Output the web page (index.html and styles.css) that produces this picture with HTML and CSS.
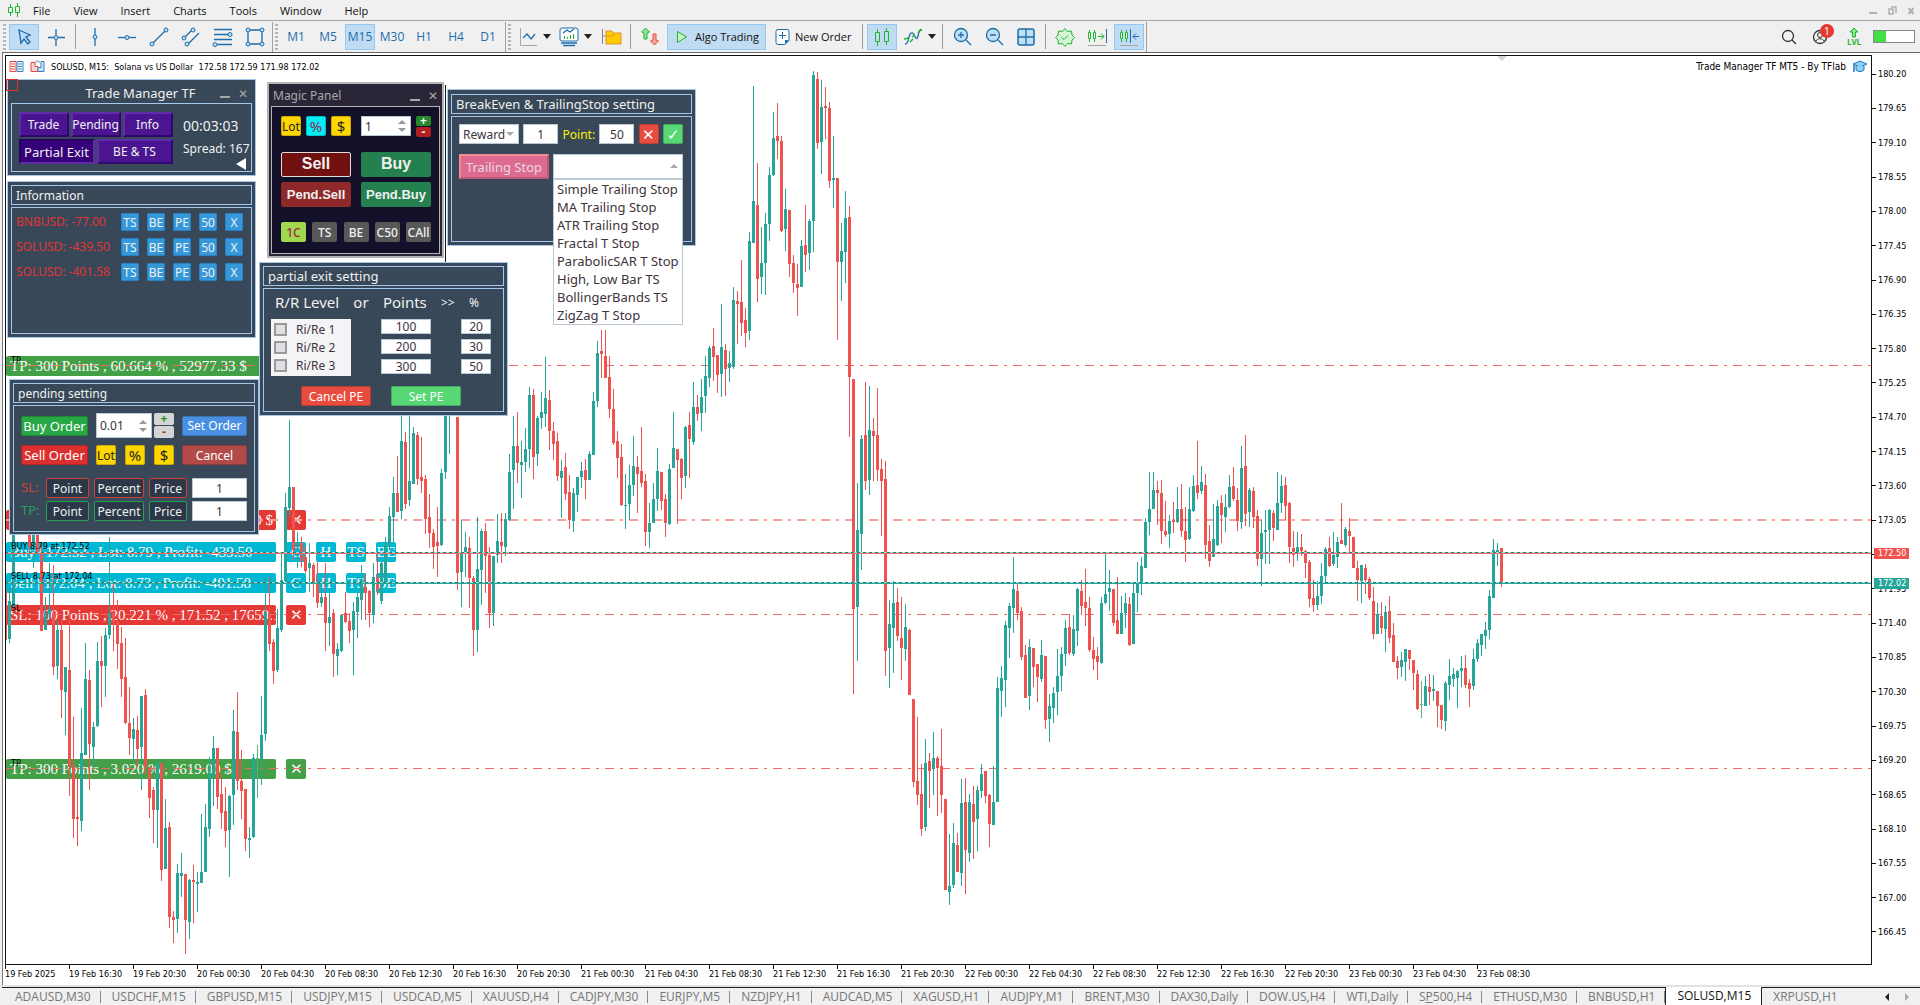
FILE: index.html
```html
<!DOCTYPE html>
<html lang="en">

<head>
    <meta charset="UTF-8">
    <meta name="viewport" content="width=device-width, initial-scale=1.0">
    <title>SOLUSD, M15</title>
    <link rel="stylesheet" href="styles.css">
</head>

<body>
    <header class="menubar">
        <svg class="app-icon" width="14" height="14" viewBox="0 0 14 14"><path d="M3.5 1v3M3.5 10v3M10.5 0v3M10.5 10v4M1.5 4.5h4v5h-4zM8.5 3.5h4v6h-4z" fill="none" stroke="#1fb52e"/></svg>
        <nav class="menu">
            <a href="#">File</a>
            <a href="#">View</a>
            <a href="#">Insert</a>
            <a href="#">Charts</a>
            <a href="#">Tools</a>
            <a href="#">Window</a>
            <a href="#">Help</a>
        </nav>
        <div class="window-buttons">
            <button aria-label="Minimize"><svg width="9" height="9"><path d="M0 7h8" stroke="#b0b0b0" stroke-width="2"/></svg></button>
            <button aria-label="Restore"><svg width="9" height="9"><path d="M1 3h4v5H1zM3 1h5v6" fill="none" stroke="#b0b0b0" stroke-width="1.5"/></svg></button>
            <button aria-label="Close"><svg width="9" height="9"><path d="M1.500 2l5 6M6.500 2l-5 6" stroke="#b0b0b0" stroke-width="2"/></svg></button>
        </div>
    </header>

    <div class="toolbar">
        <span class="grip"></span>
        <button class="tool active" aria-label="Cursor"><svg width="24" height="24"><path d="M7 5l11 5-4 2 4 5-2 2-4-5-3 4z" class="line"/></svg></button>
        <button class="tool" aria-label="Crosshair"><svg width="24" height="24"><path d="M12 4v6M12 14v7M4 12.500h6M14 12.500h7" class="line"/><circle cx="12" cy="12.500" r="2" class="dot"/></svg></button>
        <span class="sep"></span>
        <button class="tool" aria-label="Vertical line"><svg width="24" height="24"><path d="M12 3v18" class="line"/><circle cx="12" cy="12" r="2" class="dot"/></svg></button>
        <button class="tool" aria-label="Horizontal line"><svg width="24" height="24"><path d="M3 12.500h18" class="line"/><circle cx="12" cy="12.500" r="2" class="dot"/></svg></button>
        <button class="tool" aria-label="Trend line"><svg width="24" height="24"><path d="M5 19L19 5" class="line"/><circle cx="5" cy="19" r="2" class="dot"/><circle cx="19" cy="5" r="2" class="dot"/></svg></button>
        <button class="tool" aria-label="Equidistant channel"><svg width="24" height="24"><path d="M5 13l8-8M8 20L20 8" class="line"/><circle cx="5" cy="13" r="2" class="dot"/><circle cx="14" cy="5" r="2" class="dot"/><circle cx="8" cy="19" r="2" class="dot"/></svg></button>
        <button class="tool" aria-label="Fibonacci"><svg width="24" height="24"><path d="M3 4.500h18M3 9.500h14M3 14.500h18M6 19.500h15" class="line"/><circle cx="19" cy="9.500" r="2" class="dot"/><circle cx="4" cy="19.500" r="2" class="dot"/></svg></button>
        <button class="tool" aria-label="Rectangle"><svg width="24" height="24"><path d="M5 5h14v14H5z" class="line"/><circle cx="5" cy="5" r="2" class="dot"/><circle cx="19" cy="5" r="2" class="dot"/><circle cx="5" cy="19" r="2" class="dot"/><circle cx="19" cy="19" r="2" class="dot"/></svg></button>
        <span class="bar"></span>
        <span class="grip"></span>
        <button class="tool frame">M1</button>
        <button class="tool frame">M5</button>
        <button class="tool frame active">M15</button>
        <button class="tool frame">M30</button>
        <button class="tool frame">H1</button>
        <button class="tool frame">H4</button>
        <button class="tool frame">D1</button>
        <span class="bar"></span>
        <span class="grip"></span>
        <button class="tool drop" aria-label="Line chart"><svg width="22" height="24"><path d="M3.500 3v17.500H20" fill="none" stroke="#a5a5a5"/><path d="M6 13l4-4 4 5 4-5" class="line"/></svg></button>
        <button class="tool drop" aria-label="Indicators"><svg width="22" height="24"><rect x="2" y="3" width="18" height="13" rx="2" fill="#fff" stroke="#1c6cab"/><path d="M5 8l4-3 3 2 4-3" class="line"/><path d="M6.500 14v-3M9.500 14v-2M12.500 14v-4M15.500 14v-5" stroke="#1fb52e"/><path d="M3 18h16M5 20.500h12" class="line"/></svg></button>
        <button class="tool" aria-label="Objects"><svg width="24" height="24"><path d="M3.500 4v15M3.500 11h4" fill="none" stroke="#888"/><path d="M7 6h6l1 2h8v11H7z" fill="#fc0" stroke="#e0912a"/><path d="M7 11h7l1-2" fill="none" stroke="#e0912a"/></svg></button>
        <span class="sep"></span>
        <button class="tool" aria-label="Depth of market"><svg width="24" height="24"><path d="M7.500 3l4 4-2.500 1v6H6V8L3.500 7z" fill="#8fe39a" stroke="#1fb52e"/><path d="M15 9h3v6l2.500 1-4 4-4-4 2.500-1z" fill="#f7a59f" stroke="#e84a42"/></svg></button>
        <button class="tool wide active"><svg width="16" height="16"><path d="M3.500 2.500l9 5.500-9 5.500z" fill="#c9f2c9" stroke="#1fb52e"/></svg>Algo Trading</button>
        <button class="tool wide"><svg width="15" height="18"><path d="M3 1.500h9a2 2 0 0 1 2 2v9l-4 4H3a2 2 0 0 1-2-2v-11a2 2 0 0 1 2-2z" fill="#fff" stroke="#1c6cab"/><path d="M14 12l-4 4v-4z" fill="#1c6cab"/><path d="M4 7.500h7M7.500 4v7" stroke="#1c6cab"/></svg>New Order</button>
        <span class="sep"></span>
        <button class="tool active" aria-label="Candles"><svg width="22" height="24"><path d="M6.500 4v3M6.500 17v4M15.500 3v3M15.500 17v3M4.500 7.500h4v9h-4zM13.500 6.500h4v10h-4z" fill="none" stroke="#1fb52e"/></svg></button>
        <button class="tool drop" aria-label="Chart type"><svg width="22" height="24"><path d="M3 19c3 0 3-3 4-7s3-6 5-2 3 5 4 1 1-6 4-6" class="line"/><path d="M2 14l5-1M10 12l3-2M16 8l3-4M8 17l3-3" fill="none" stroke="#1fb52e" stroke-width="1.500"/></svg></button>
        <span class="sep"></span>
        <button class="tool" aria-label="Zoom in"><svg width="24" height="24"><circle cx="11" cy="10" r="6.500" fill="#bfe0f2" stroke="#1c6cab" stroke-width="1.300"/><path d="M8 10h6M11 7v6M16 15l5 5" class="line"/></svg></button>
        <button class="tool" aria-label="Zoom out"><svg width="24" height="24"><circle cx="11" cy="10" r="6.500" fill="#bfe0f2" stroke="#1c6cab" stroke-width="1.300"/><path d="M8 10h6M16 15l5 5" class="line"/></svg></button>
        <button class="tool" aria-label="Tile windows"><svg width="24" height="24"><rect x="4" y="4" width="16" height="16" rx="2" fill="#bfe0f2" stroke="#1c6cab" stroke-width="1.500"/><path d="M4 12h16M12 4v16" class="line"/></svg></button>
        <span class="sep"></span>
        <button class="tool" aria-label="Auto trading settings"><svg width="24" height="24"><path d="M12 3.500l2.500 3 4-.500.500 4 2.500 2.500-2.500 2.500-.500 4-4-.500-2.500 3-2.500-3-4 .500-.500-4-2.500-2.500L5 10l.500-4 4 .500z" fill="#d5f5d5" stroke="#1fb52e"/><path d="M8.500 12.500l2.500 2 4-4" fill="none" stroke="#1fb52e"/></svg></button>
        <button class="tool" aria-label="Auto scroll"><svg width="24" height="24"><path d="M4.500 5v12M9.500 5v12" stroke="#1fb52e"/><path d="M3.500 7.500h2v6h-2zM8.500 7.500h2v6h-2z" fill="#fff" stroke="#1fb52e"/><path d="M13 11.500h6M16 8.500l3 3-3 3" fill="none" stroke="#1fb52e"/><path d="M21.500 4v14" stroke="#1c6cab"/><path d="M3 20.500h18" stroke="#a5a5a5"/></svg></button>
        <button class="tool active" aria-label="Chart shift"><svg width="24" height="24"><path d="M4.500 5v12M9.500 5v12" stroke="#1fb52e"/><path d="M3.500 7.500h2v6h-2zM8.500 7.500h2v6h-2z" fill="#fff" stroke="#1fb52e"/><path d="M13.500 4v14M16 11.500h6M19 8.500l-3 3 3 3" fill="none" stroke="#1c6cab"/><path d="M3 20.500h18" stroke="#a5a5a5"/></svg></button>
        <span class="bar"></span>

        <div class="status">
            <button class="tool" aria-label="Search"><svg width="18" height="18"><circle cx="8" cy="8" r="5.500" fill="none" stroke="#333" stroke-width="1.300"/><path d="M12 12l4 4" stroke="#333" stroke-width="1.300"/></svg></button>
            <button class="tool account" aria-label="Account"><svg width="18" height="18"><circle cx="9" cy="9" r="6.500" fill="none" stroke="#333" stroke-width="1.300"/><circle cx="9" cy="7" r="2.500" fill="none" stroke="#333"/><path d="M5 13c1-3 7-3 8 0" fill="none" stroke="#333"/></svg><span class="badge">1</span></button>
            <span class="level"><svg width="12" height="11"><path d="M6 1l4 4H7.500v5h-3V5H2z" fill="#8fe39a" stroke="#1fb52e"/></svg>LVL</span>
            <span class="gauge"><span></span></span>
        </div>
    </div>

    <main class="chart">
        <section class="plot">
            <!-- position bars, drawn under the candles -->
            <div class="trade-line tp first"><span class="info">TP: 300 Points , 60.664 % , 52977.33 $</span></div>
            <div class="trade-line sl second"><span class="info end">SL: 100 Points , 20.221 % , 17659.10 $</span><button>✕</button></div>
            <div class="trade-line pos buy-pos"><span class="info">Buy | 172.52 , Lot: 8.79 , Profit: -439.50</span><button>C</button><button>H</button><button>TS</button><button>BE</button></div>
            <div class="trade-line pos sell-pos"><span class="info">Sell | 172.04 , Lot: 8.73 , Profit: -401.58</span><button>C</button><button>H</button><button>TS</button><button>BE</button></div>
            <div class="trade-line sl third"><span class="info">SL: 100 Points , 20.221 % , 171.52 , 17659.1</span><button>✕</button></div>
            <div class="trade-line tp fourth"><span class="info">TP: 300 Points , 3.020 % , 2619.00 $</span><button>✕</button></div>

            <svg class="candles" id="candles"></svg>

            <div class="chart-title">
                <svg width="15" height="13"><path d="M1 1.500h6v10H1z" fill="#fff" stroke="#e84a42"/><path d="M8 1.500h6v10H8z" fill="#fff" stroke="#2f80c4"/><path d="M2 4h4M2 6.500h4M2 9h4" stroke="#e84a42"/><path d="M9 4h4M9 6.500h4M9 9h4" stroke="#2f80c4"/></svg>
                <svg width="15" height="13"><path d="M1 2.500h4v4h3v5H1z" fill="#fbd3cf" stroke="#e84a42"/><path d="M14 1.500h-3v6H8v4h6z" fill="#cfe6fa" stroke="#2f80c4"/><path d="M6 3V1h3v2" fill="none" stroke="#999"/></svg>
                <span>SOLUSD, M15:&nbsp; Solana vs US Dollar&nbsp; 172.58 172.59 171.98 172.02</span>
            </div>
            <div class="expert-title">
                <span>Trade Manager TF MT5 - By TFlab</span>
                <svg width="16" height="13"><path d="M1 4l7-3 7 3-7 3z" fill="#8fd0f5" stroke="#1c7ac0"/><path d="M4 6v4c2 2 6 2 8 0V6" fill="#8fd0f5" stroke="#1c7ac0"/><path d="M2 5v7" stroke="#1c7ac0" stroke-width="1.500"/></svg>
            </div>
            <span class="shift-mark"></span>

            <span class="order-label l1">TP</span>
            <span class="order-label l2">BUY 8.79 at 172.52</span>
            <span class="order-label l3">SELL 8.73 at 172.04</span>
            <span class="order-label l4">SL</span>
            <span class="order-label l5">TP</span>

            <section class="panel manager">
                <div class="title"><h2>Trade Manager TF</h2><button class="min" aria-label="Minimize"></button><button aria-label="Close">✕</button></div>
                <div class="body">
                    <div class="tabs">
                        <button>Trade</button><button>Pending</button><button>Info</button>
                        <button class="half pressed">Partial Exit</button><button class="half">BE &amp; TS</button>
                    </div>
                    <div class="readout"><span class="clock">00:03:03</span><span>Spread: 167</span><button class="collapse" aria-label="Collapse"></button></div>
                </div>
            </section>
            <span class="anchor"></span>

            <section class="panel information">
                <h2 class="head">Information</h2>
                <div class="body">
                    <table>
                        <tr><th>BNBUSD: -77.00</th><td><button>TS</button></td><td><button>BE</button></td><td><button>PE</button></td><td><button>50</button></td><td><button>X</button></td></tr>
                        <tr><th>SOLUSD: -439.50</th><td><button>TS</button></td><td><button>BE</button></td><td><button>PE</button></td><td><button>50</button></td><td><button>X</button></td></tr>
                        <tr><th>SOLUSD: -401.58</th><td><button>TS</button></td><td><button>BE</button></td><td><button>PE</button></td><td><button>50</button></td><td><button>X</button></td></tr>
                    </table>
                </div>
            </section>

            <section class="panel pending">
                <h2 class="head">pending setting</h2>
                <div class="body">
                    <div class="row">
                        <button class="btn order green">Buy Order</button>
                        <div class="mid"><span class="spin"><input type="text" value="0.01" aria-label="Lot size"></span><span class="steps"><button class="plus">+</button><button class="minus">-</button></span></div>
                        <button class="btn action blue">Set Order</button>
                    </div>
                    <div class="row second-row">
                        <button class="btn order red">Sell Order</button>
                        <div class="mid"><button class="btn unit">Lot</button><button class="btn unit sign">%</button><button class="btn unit sign">$</button></div>
                        <button class="btn action maroon">Cancel</button>
                    </div>
                    <div class="levels stop"><label for="sl">SL:</label><button>Point</button><button class="w50">Percent</button><button class="w38">Price</button><input id="sl" type="text" value="1"></div>
                    <div class="levels take"><label for="tp">TP:</label><button>Point</button><button class="w50">Percent</button><button class="w38">Price</button><input id="tp" type="text" value="1"></div>
                </div>
            </section>

            <section class="panel partial">
                <h2 class="head">partial exit setting</h2>
                <div class="body">
                    <div class="captions"><span>R/R Level</span><span>or</span><span>Points</span><span class="small">&gt;&gt;</span><span class="small">%</span></div>
                    <div class="targets">
                        <div class="checks">
                            <label><input type="checkbox">Ri/Re 1</label>
                            <label><input type="checkbox">Ri/Re 2</label>
                            <label><input type="checkbox">Ri/Re 3</label>
                        </div>
                        <div class="fields points"><input type="text" value="100" aria-label="Points 1"><input type="text" value="200" aria-label="Points 2"><input type="text" value="300" aria-label="Points 3"></div>
                        <div class="fields percents"><input type="text" value="20" aria-label="Percent 1"><input type="text" value="30" aria-label="Percent 2"><input type="text" value="50" aria-label="Percent 3"></div>
                    </div>
                    <div class="actions"><button class="btn tomato">Cancel PE</button><button class="btn lime">Set PE</button></div>
                </div>
            </section>

            <section class="panel magic">
                <div class="title"><h2>Magic Panel</h2><button class="min" aria-label="Minimize"></button><button aria-label="Close">✕</button></div>
                <div class="body">
                    <div class="sizes">
                        <button class="btn unit">Lot</button><button class="btn unit sign cyan">%</button><button class="btn unit sign">$</button>
                        <span class="spin"><input type="text" value="1" aria-label="Volume"></span>
                        <span class="steps"><button class="plus">+</button><button class="minus">-</button></span>
                    </div>
                    <div class="deal"><button class="big sell">Sell</button><button class="big buy">Buy</button><button class="pend-sell">Pend.Sell</button><button class="pend-buy">Pend.Buy</button></div>
                    <div class="quick"><button class="on">1C</button><button>TS</button><button>BE</button><button>C50</button><button>CAll</button></div>
                </div>
            </section>

            <section class="panel breakeven">
                <h2 class="head">BreakEven &amp; TrailingStop setting</h2>
                <div class="body">
                    <div class="row be-row">
                        <span class="pick reward"><select aria-label="Break even mode"><option>Reward</option></select></span>
                        <input class="w35" type="text" value="1" aria-label="Reward">
                        <label for="point">Point:</label>
                        <input class="w35" id="point" type="text" value="50">
                        <button class="btn unit sign tomato">✕</button>
                        <button class="btn unit sign lime">✓</button>
                    </div>
                    <div class="row ts-row">
                        <button class="trailing">Trailing Stop</button>
                        <span class="pick kind"><select aria-label="Trailing stop type"><option></option></select>
                            <ul class="options">
                                <li>Simple Trailing Stop</li>
                                <li>MA Trailing Stop</li>
                                <li>ATR Trailing Stop</li>
                                <li>Fractal T Stop</li>
                                <li>ParabolicSAR T Stop</li>
                                <li>High, Low Bar TS</li>
                                <li>BollingerBands TS</li>
                                <li>ZigZag T Stop</li>
                            </ul>
                        </span>
                    </div>
                </div>
            </section>
        </section>

        <div class="prices" id="prices">
            <span class="quote ask">172.50</span>
            <span class="quote bid">172.02</span>
        </div>
        <div class="times" id="times"></div>
    </main>

    <footer class="chart-tabs">
        <nav>
            <a href="#">ADAUSD,M30</a>
            <a href="#">USDCHF,M15</a>
            <a href="#">GBPUSD,M15</a>
            <a href="#">USDJPY,M15</a>
            <a href="#">USDCAD,M5</a>
            <a href="#">XAUUSD,H4</a>
            <a href="#">CADJPY,M30</a>
            <a href="#">EURJPY,M5</a>
            <a href="#">NZDJPY,H1</a>
            <a href="#">AUDCAD,M5</a>
            <a href="#">XAGUSD,H1</a>
            <a href="#">AUDJPY,M1</a>
            <a href="#">BRENT,M30</a>
            <a href="#">DAX30,Daily</a>
            <a href="#">DOW.US,H4</a>
            <a href="#">WTI,Daily</a>
            <a href="#">S<u>P</u>500,H4</a>
            <a href="#">ETHUSD,M30</a>
            <a href="#">BNBUSD,H1</a>
            <a href="#" class="current">SOLUSD,M15</a>
            <a href="#">XRPUSD,H1</a>
        </nav>
        <div class="scroll"><button aria-label="Scroll left"></button><button class="next" aria-label="Scroll right"></button></div>
    </footer>

    <script src="chart.js"></script>
</body>

</html>
```
FILE: styles.css
```css
* {
    box-sizing: border-box;
}

body {
    margin: 0;
    height: 100vh;
    display: flex;
    flex-direction: column;
    overflow: hidden;
    background-color: #f0f0f0;
    color: #111;
    font-family: "Open Sans", sans-serif;
    font-size: 11px;
}

button, input, select {
    font: inherit;
    color: inherit;
    margin: 0;
    padding: 0;
    border: none;
    border-radius: 0;
    background: none;
    outline: none;
}

button {
    cursor: pointer;
    white-space: nowrap;
}

a {
    color: inherit;
    text-decoration: none;
}

h2 {
    margin: 0;
    font-size: inherit;
    font-weight: normal;
}

svg {
    flex: none;
}

/* menu and toolbar */
.menubar {
    display: flex;
    align-items: center;
    height: 21px;
    padding-left: 7px;
    border-bottom: 1px solid #a5a5a5;
}

.menu {
    display: flex;
    flex: 1;
}

.menu a {
    padding: 0 11px 0 12px;
}

.window-buttons {
    display: flex;
    gap: 10px;
    padding-right: 4px;
}

.window-buttons button {
    display: flex;
}

.toolbar {
    display: flex;
    align-items: center;
    gap: 2px;
    height: 31px;
    padding-left: 3px;
}

.tool {
    display: flex;
    align-items: center;
    justify-content: center;
    width: 30px;
    height: 26px;
    border: 1px solid transparent;
}

.tool.active {
    background-color: #c0dcf3;
    border-color: #90c8f6;
}

.tool .line {
    fill: none;
    stroke: #1c6cab;
    stroke-width: 1.3;
}

.tool .dot {
    fill: #bfe0f2;
    stroke: #1c6cab;
}

.tool.frame {
    color: #1c6cab;
    font-size: 12px;
}

.tool.drop {
    width: 39px;
    gap: 4px;
}

.tool.drop::after {
    content: "";
    border: 4px solid transparent;
    border-top: 5px solid #222;
    border-bottom: none;
}

.tool.wide {
    width: auto;
    gap: 5px;
    padding: 0 6px;
}

.grip {
    width: 3px;
    height: 26px;
    margin-right: 1px;
    background: repeating-linear-gradient(#b5b5b5 0 2px, transparent 2px 4px);
}

.sep {
    width: 1px;
    height: 25px;
    margin: 0 2px;
    background-color: #999;
}

.bar {
    width: 1px;
    height: 30px;
    background-color: #a0a0a0;
}

.status {
    display: flex;
    align-items: center;
    gap: 1px;
    margin-left: auto;
    padding-right: 5px;
}

.account {
    position: relative;
}

.badge {
    position: absolute;
    top: -1px;
    right: 0;
    width: 14px;
    height: 14px;
    border-radius: 7px;
    background-color: #e53935;
    color: #fff;
    font-size: 11px;
    line-height: 14px;
}

.level {
    display: flex;
    flex-direction: column;
    align-items: center;
    width: 36px;
    color: #1fb52e;
    font-size: 8px;
    font-weight: bold;
    line-height: 8px;
}

.gauge {
    width: 42px;
    height: 13px;
    border: 1px solid #888;
    background-color: #fff;
}

.gauge span {
    display: block;
    width: 30%;
    height: 100%;
    background-color: #43df45;
}

/* chart window */
.chart {
    flex: 1;
    min-height: 0;
    display: grid;
    grid-template-columns: 1fr 48px;
    grid-template-rows: 1fr 20px;
    margin-left: 2px;
    padding: 2px 0 0 2px;
    border-top: 1px solid #666;
    border-left: 1px solid #777;
    background-color: #fff;
    color: #000;
    font-family: "DejaVu Sans Condensed", "DejaVu Sans", sans-serif;
    font-size: 9px;
}

.plot {
    position: relative;
    overflow: hidden;
    border: 1px solid #111;
}

.candles {
    position: absolute;
    top: 0;
    left: 0;
    width: 100%;
    height: 100%;
    shape-rendering: crispEdges;
}

.candles .up {
    fill: #26a69a;
}

.candles .down {
    fill: #ef5350;
}

.candles .flat {
    fill: #55b77f;
}

.candles .order {
    stroke: #ef6a66;
    stroke-dasharray: 9 6 3 6;
}

.candles .order.soft {
    stroke: #f7a09e;
    stroke-width: 2;
}

.candles .entry {
    stroke: #1f8074;
    stroke-dasharray: 3 3;
}

.candles .entry-base {
    stroke: #a8d8d2;
}

.candles .ask {
    stroke: #ef6a68;
}

.candles .bid {
    stroke: #26a69a;
}

.candles .edge {
    stroke: #111;
}

.chart-title, .expert-title {
    position: absolute;
    top: 4px;
    display: flex;
    align-items: center;
    gap: 6px;
    white-space: pre;
}

.chart-title {
    left: 3px;
}

.expert-title {
    right: 3px;
    font-size: 10px;
}

.shift-mark {
    position: absolute;
    top: 0;
    left: 1491px;
    border: 5px solid transparent;
    border-top-color: #d5d5d5;
    border-bottom: none;
}

.prices {
    position: relative;
    display: flex;
    flex-direction: column;
    padding: 2px 0 16px;
}

.prices .price {
    flex: 1;
    display: flex;
    align-items: center;
    gap: 2px;
}

.prices .price::before {
    content: "";
    width: 4px;
    height: 1px;
    background-color: #111;
}

.quote {
    position: absolute;
    left: 2px;
    width: 35px;
    height: 11px;
    padding-left: 4px;
    color: #fff;
    line-height: 11px;
    z-index: 1;
}

.quote.ask {
    top: 493px;
    background-color: #ef5350;
}

.quote.bid {
    top: 523px;
    background-color: #26a69a;
}

.times {
    grid-column: 1 / 3;
    display: flex;
    overflow: hidden;
}

.times span {
    flex: none;
    width: 64px;
    padding-top: 3px;
    white-space: nowrap;
}

.times span::before {
    content: "";
    display: block;
    width: 1px;
    height: 4px;
    margin-top: -3px;
    background-color: #111;
}

/* position bars */
.trade-line {
    position: absolute;
    left: 0;
    display: flex;
    gap: 10px;
    height: 20px;
    color: #fff;
    font-family: "Liberation Serif", serif;
    font-size: 15px;
    line-height: 20px;
}

.trade-line .info {
    width: 270px;
    padding-left: 4px;
    overflow: hidden;
    white-space: pre;
    border-radius: 2px;
}

.trade-line .info.end {
    text-align: right;
    padding-right: 3px;
}

.trade-line button {
    width: 20px;
    border-radius: 2px;
}

.tp .info, .tp button {
    background-color: #43a047;
}

.sl .info, .sl button {
    background-color: #e53935;
}

.pos .info, .pos button {
    background-color: #00b8d4;
}

.first { top: 300px; }
.second { top: 454px; }
.buy-pos { top: 486px; }
.sell-pos { top: 517px; }
.third { top: 549px; }
.fourth { top: 703px; }

.order-label {
    position: absolute;
    left: 5px;
    line-height: 10px;
}

.l1 { top: 299px; }
.l2 { top: 485px; }
.l3 { top: 515px; }
.l4 { top: 547px; }
.l5 { top: 702px; }

/* floating panels */
.panel {
    position: absolute;
    display: flex;
    flex-direction: column;
    padding: 3px;
    border: 1px solid #a4c8ec;
    background-color: #384858;
    color: #f0f0f0;
    font-family: "Noto Sans", sans-serif;
    font-size: 12px;
}

.panel input, .panel select {
    background-color: #fff;
    color: #40333c;
    border: 1px solid #b8c8d4;
}

.panel input[type="text"] {
    text-align: center;
    min-width: 0;
}

.panel .head {
    height: 20px;
    margin-bottom: 2px;
    padding-left: 4px;
    border: 1px solid #a4c8ec;
    line-height: 19px;
}

.panel .body {
    flex: 1;
    border: 1px solid #a4c8ec;
}

.title {
    display: flex;
    align-items: center;
    gap: 8px;
    height: 20px;
    color: #a8a8a8;
}

.title h2 {
    flex: 1;
    font-size: 13px;
    line-height: 18px;
}

.title .min {
    width: 10px;
    height: 2px;
    margin-top: 8px;
    background-color: #a8a8a8;
}

.btn {
    height: 20px;
    border: 1px solid rgba(0, 0, 0, 0.2);
    border-radius: 2px;
    color: #fff;
}

.unit {
    width: 20px;
    background-color: #ffd700;
    color: #222;
}

.sign {
    font-size: 15px;
    line-height: 16px;
}

.cyan { background-color: #00f0f8; color: #a02050; }
.green { background-color: #28a745; }
.blue { background-color: #4a90e2; }
.red { background-color: #dc3030; }
.maroon { background-color: #b34a4a; }
.tomato { background-color: #e84c3f; color: #fff; }
.lime { background-color: #58d875; color: #fff; }

.spin {
    position: relative;
    display: flex;
}

.spin input {
    width: 100%;
    padding-left: 3px;
}

.spin::before, .spin::after {
    content: "";
    position: absolute;
    right: 5px;
    border: 4px solid transparent;
}

.spin::before {
    top: calc(50% - 6px);
    border-bottom-color: #999;
    border-top: none;
}

.spin::after {
    bottom: calc(50% - 6px);
    border-top-color: #999;
    border-bottom: none;
}

.panel .spin input {
    text-align: left;
}

.steps {
    display: flex;
    flex-direction: column;
    gap: 1px;
}

.steps button {
    flex: 1;
    border-radius: 2px;
    line-height: 10px;
    font-weight: bold;
}

/* trade manager */
.manager {
    top: 23px;
    left: 1px;
    width: 249px;
    height: 97px;
}

.manager .title {
    padding-right: 4px;
}

.manager h2 {
    padding-left: 58px;
    text-align: center;
    color: #f0f0f0;
}

.manager .body {
    display: flex;
    gap: 10px;
    padding: 8px 0 0 7px;
    overflow: hidden;
}

.tabs {
    flex: none;
    display: flex;
    flex-wrap: wrap;
    align-content: flex-start;
    gap: 2px;
    width: 154px;
}

.tabs button {
    width: 50px;
    height: 25px;
    background-color: #4b1592;
    border: 2px solid #5f2daa;
    border-right-color: #2f086e;
    border-bottom-color: #2f086e;
    text-indent: -1px;
}

.tabs .half {
    width: 76px;
}

.tabs .pressed {
    background-color: #35007a;
    border-color: #2a0062 #5f2daa #5f2daa #2a0062;
    font-size: 13px;
}

.readout {
    display: flex;
    flex-direction: column;
    width: 70px;
    white-space: nowrap;
}

.readout .clock {
    height: 28px;
    font-size: 14px;
    line-height: 28px;
}

.collapse {
    align-self: flex-end;
    margin: 1px 5px 0 0;
    border: 6px solid transparent;
    border-right: 10px solid #fff;
    border-left: none;
}

.anchor {
    position: absolute;
    top: 23px;
    left: 0;
    width: 12px;
    height: 12px;
    border: 1px solid #e03030;
}

/* information */
.information {
    top: 125px;
    left: 1px;
    width: 249px;
    height: 157px;
}

.information .head {
    line-height: 20px;
}

.information table {
    width: 100%;
    border-spacing: 0;
    margin-top: 1px;
}

.information th {
    padding-left: 4px;
    text-align: left;
    font-weight: normal;
    color: #e03535;
}

.information td {
    width: 26px;
    height: 25px;
    padding: 0;
}

.information td button {
    display: block;
    width: 18px;
    height: 18px;
    background-color: #3498db;
    border: 1px solid #2a80c0;
    border-radius: 1px;
}

/* pending */
.pending {
    top: 323px;
    left: 3px;
    width: 250px;
    height: 156px;
}

.pending .body {
    padding: 7px;
}

.row {
    display: flex;
    align-items: center;
    justify-content: space-between;
}

.order {
    width: 67px;
    font-size: 13px;
    line-height: 18px;
}

.action {
    width: 65px;
}

.mid {
    display: flex;
    justify-content: space-between;
    width: 78px;
}

.mid .spin {
    width: 56px;
    height: 25px;
}

.mid .steps {
    width: 20px;
}

.pending .steps button {
    background-color: #d5d5d8;
    color: #2a8f2a;
}

.pending .steps .minus {
    color: #b03030;
}

.second-row {
    margin: 7px 0 13px;
}

.levels {
    display: flex;
    gap: 5px;
    height: 20px;
    margin-bottom: 3px;
}

.levels label {
    width: 20px;
    font-size: 13px;
    line-height: 18px;
}

.levels button {
    width: 43px;
    background-color: #2c3848;
    border: 1px solid #d04038;
    border-radius: 2px;
}

.levels .w50 { width: 50px; }
.levels .w38 { width: 38px; }

.levels input {
    flex: 1;
}

.stop label { color: #d04038; }
.take label { color: #28a058; }
.take button { border-color: #28a058; }

/* partial exit */
.partial {
    top: 206px;
    left: 253px;
    width: 249px;
    height: 154px;
}

.partial .head, .breakeven .head {
    font-size: 13px;
}

.captions {
    display: flex;
    align-items: center;
    justify-content: space-between;
    height: 30px;
    padding: 0 24px 4px 11px;
    font-size: 15px;
}

.captions .small {
    font-size: 12px;
}

.targets {
    display: flex;
    padding-left: 7px;
}

.checks {
    width: 80px;
    height: 57px;
    padding: 1px 3px;
    background-color: #f4f4f6;
    color: #40333c;
}

.checks label {
    display: flex;
    align-items: center;
    gap: 9px;
    height: 18px;
}

.checks input {
    appearance: none;
    width: 13px;
    height: 13px;
    border: 2px solid #999;
    background-color: #e0e0e4;
}

.fields {
    display: flex;
    flex-direction: column;
    gap: 5px;
    width: 50px;
    margin-left: 30px;
}

.fields input {
    width: 100%;
    height: 15px;
    line-height: 13px;
}

.percents {
    width: 30px;
}

.actions {
    display: flex;
    justify-content: center;
    gap: 20px;
    padding: 10px 5px 0 0;
}

.actions .btn {
    width: 70px;
}

/* magic panel */
.magic {
    top: 26px;
    left: 261px;
    width: 177px;
    height: 176px;
    padding: 1px 2px 2px;
    border: 2px solid #b4b4b4;
    background-color: #2a2638;
}

.magic .title {
    height: 21px;
    padding: 0 2px 0 2px;
}

.magic h2 {
    font-size: 12px;
}

.magic .body {
    display: flex;
    flex-direction: column;
    justify-content: space-between;
    padding: 9px 8px 11px 9px;
    border-color: #b4b4b4;
    background-color: #13102a;
}

.sizes {
    display: flex;
    gap: 5px;
    height: 20px;
}

.sizes .spin {
    width: 50px;
    margin-left: 5px;
}

.sizes .steps {
    width: 15px;
}

.sizes .plus { background-color: #28882c; }
.sizes .minus { background-color: #b02020; }

.deal {
    display: grid;
    grid-template-columns: 70px 70px;
    grid-auto-rows: 25px;
    gap: 5px 10px;
    font-family: "Liberation Sans", sans-serif;
    font-weight: bold;
    font-size: 13px;
}

.deal button {
    border-radius: 2px;
    background-color: #258050;
}

.deal .big {
    font-size: 16px;
}

.deal .sell {
    background-color: #701010;
    border: 1px solid #ddd;
}

.deal .pend-sell {
    background-color: #8f2828;
}

.quick {
    display: flex;
    justify-content: space-between;
    height: 20px;
}

.quick button {
    width: 25px;
    background-color: #585858;
    border-radius: 2px;
    font-weight: 500;
}

.quick .on {
    background-color: #a0d850;
    color: #a02848;
}

/* break even and trailing stop */
.breakeven {
    top: 33px;
    left: 441px;
    width: 249px;
    height: 157px;
    padding-top: 4px;
}

.breakeven .body {
    padding: 7px 8px 7px 7px;
}

.breakeven label {
    color: #ffef00;
}

.w35 {
    width: 35px;
    height: 20px;
}

.pick {
    position: relative;
    display: flex;
}

.pick select {
    width: 100%;
    padding-left: 3px;
    appearance: none;
}

.pick::after {
    content: "";
    position: absolute;
    right: 5px;
    top: 8px;
    border: 4px solid transparent;
    border-top-color: #aaa;
    border-bottom: none;
}

.reward {
    width: 60px;
    height: 20px;
}

.ts-row {
    margin-top: 10px;
}

.trailing {
    width: 90px;
    height: 25px;
    border: 2px solid #f58a94;
    border-right-color: #b85a78;
    border-bottom-color: #b85a78;
    background-color: #dd6b8f;
    color: #e8d8e8;
    font-size: 13px;
}

.kind {
    width: 130px;
    height: 25px;
}

.kind::after {
    top: 10px;
    border-bottom: 4px solid #aaa;
    border-top: none;
}

.options {
    position: absolute;
    top: 25px;
    left: 0;
    width: 100%;
    margin: 0;
    padding: 0 0 0 3px;
    list-style: none;
    background-color: #fff;
    border: 1px solid #b8c8d4;
    color: #40333c;
    font-size: 13px;
    line-height: 18px;
    white-space: nowrap;
}

/* chart tabs */
.chart-tabs {
    display: flex;
    justify-content: space-between;
    height: 20px;
    border-top: 2px solid #e2e2e2;
    color: #777;
    font-size: 12px;
}

.chart-tabs nav {
    display: flex;
    flex: 1;
    margin-left: 2px;
    padding-left: 2px;
    border-top: 1px solid #222;
}

.chart-tabs a {
    padding: 0 10px 0 11px;
    line-height: 18px;
    background: linear-gradient(#888, #888) right 3px / 1px 12px no-repeat;
}

.chart-tabs .current {
    margin-top: -1px;
    background: #fff;
    border-right: 1px solid #222;
    border-left: 1px solid #222;
    color: #111;
}

.chart-tabs a:last-child {
    background: none;
}

.scroll {
    display: flex;
    align-items: center;
    gap: 16px;
    padding-right: 11px;
    border-top: 1px solid #222;
}

.scroll button {
    border: 4px solid transparent;
    border-right-color: #222;
    border-left: none;
}

.scroll .next {
    border-left: 4px solid #aaa;
    border-right: none;
}
```
FILE: chart.js
```js
// one candle every 4px: u/d/f (up, down, flat) high top bottom low, in window pixels
var candles = `d590,590,640,640 u588,601,639,643 u500,510,607,607 d490,500,520,525 u490,500,520,525 d490,500,520,528
d500,510,547,552 u500,520,547,568 d500,520,554,554 d545,552,631,631 u597,612,630,630 u563,609,614,620 d565,613,667,675
u620,630,666,679 d620,630,690,718 u667,667,692,735 d607,670,767,796 d717,766,819,838 d777,817,819,846 u708,753,821,831
u643,679,755,755 d670,680,744,790 u722,727,747,767 u642,661,726,727 d636,661,666,707 u628,635,666,697 u537,613,635,639
d583,613,622,651 d600,622,644,669 d627,643,679,697 d638,677,723,724 d687,723,738,755 u718,729,739,760 d716,730,749,767
u696,696,747,790 d689,695,767,775 d767,767,798,818 d787,790,810,843 u762,763,810,848 d763,763,870,881 u799,828,869,869
d822,827,917,928 d911,917,920,943 u864,873,919,933 u853,873,876,897 d874,874,920,954 u879,880,922,939 d865,880,882,923
u872,882,884,912 u814,872,883,883 u804,827,872,872 u757,773,829,837 u736,748,775,806 d748,748,797,809 d773,794,813,829
d787,811,831,847 u795,796,830,877 u710,731,795,825 d692,732,781,790 d750,781,791,819 d789,789,839,851 u827,838,840,858
u754,758,837,838 f745,758,759,798 u696,735,759,785 u577,612,734,741 d577,613,644,651 d639,642,671,684 u609,628,670,672
u552,580,630,632 u493,507,581,583 u420,487,508,517 d487,487,550,560 u532,542,547,568 d537,543,561,567 d547,557,571,573
u543,563,568,592 d563,565,583,597 d562,582,603,608 u580,597,603,607 d563,597,623,651 u593,617,623,646 d609,613,654,677
u643,649,656,675 u615,615,651,652 d592,613,622,623 d613,621,631,643 u602,611,630,675 u592,597,612,638 u565,580,600,620
d573,587,593,620 d590,591,613,627 u563,577,615,623 d553,577,590,595 u562,563,601,604 u537,543,582,583 u507,516,544,550
u477,493,517,542 d456,493,512,512 u400,441,511,519 d432,442,504,509 u400,481,500,506 u427,433,484,484 d432,435,479,485
d437,477,481,493 d475,479,519,534 d494,517,533,548 d529,533,547,569 d507,542,546,577 u469,473,545,546 u390,400,472,479
u390,400,416,454 u390,395,405,410 d417,417,573,590 u520,553,572,607 u532,547,553,577 d537,548,578,608 d576,578,630,656
u517,569,630,652 u529,531,570,605 d523,531,556,593 d547,555,613,628 u556,556,613,626 u514,541,555,563 d513,542,546,563
u513,519,547,556 u454,472,520,521 u416,446,470,509 d412,446,463,483 u441,462,465,498 u428,449,462,472 u387,395,449,468
d389,395,457,479 u416,418,454,466 u392,412,418,429 u357,398,414,427 d390,400,431,450 d422,431,444,460 d433,441,476,481
u460,471,478,518 d453,467,494,500 d475,492,520,529 u488,493,521,532 u477,477,495,512 u462,471,477,488 d459,470,480,499
u451,454,480,480 u392,401,455,455 u341,353,401,407 d330,351,354,378 d330,356,378,378 d356,377,409,418 d389,409,443,445
d431,441,458,478 d444,457,505,506 u474,505,506,529 u465,485,504,520 u436,466,485,496 d456,467,474,513 d427,471,483,487
d474,481,532,546 u503,523,532,548 u483,499,523,523 u448,471,499,511 d472,472,501,510 d494,499,523,537 u464,469,524,525
u412,448,468,468 d449,449,460,524 d458,459,478,499 u426,427,476,488 d412,425,439,478 u382,407,442,445 d395,407,414,421
u379,397,413,431 u356,376,396,413 u346,348,378,387 d328,346,357,381 d355,355,375,393 u304,347,374,397 d344,350,369,396
u351,363,368,382 u287,300,367,369 d291,301,304,344 d260,302,323,336 d308,320,333,347 u232,241,331,340 u86,201,243,243
d163,205,279,302 u227,263,277,294 u213,224,263,295 u167,175,224,241 u112,138,175,176 d103,136,141,159 d136,141,231,232
u189,209,229,251 d210,210,264,277 d255,263,283,293 d264,284,288,316 u240,246,287,287 d205,245,255,272 u219,221,253,270
u71,75,221,252 d72,79,143,149 u80,107,142,174 d87,106,108,139 d102,108,181,188 u136,178,180,208 d178,178,262,340
u223,251,262,301 u191,218,252,283 d206,217,377,437 d379,379,609,694 u483,530,607,661 u435,439,534,570 d382,435,481,490
u386,430,480,495 d418,431,436,481 d388,435,470,481 d459,469,481,536 d461,479,651,676 u600,624,648,688 u581,603,628,673
d588,602,636,641 d597,638,648,680 u604,627,649,661 d629,630,695,695 d699,699,782,787 d717,781,795,805 d764,794,829,836
u739,763,827,831 d753,761,771,808 u732,758,769,795 d756,758,768,816 d729,766,795,813 d799,799,890,890 u834,886,892,905
u823,843,885,888 d833,845,872,872 u779,803,873,886 d778,802,850,894 u794,802,853,862 d786,804,822,859 u786,790,819,851
u764,774,791,798 d771,771,796,803 d794,795,824,847 u766,802,825,825 u677,688,802,802 u666,678,691,717 u621,625,680,707
u603,606,628,658 u557,589,608,633 d583,591,613,620 d607,611,657,660 d645,655,698,698 u639,647,696,710 d648,648,667,687
d664,664,677,702 u640,655,679,682 d656,656,720,729 u694,706,719,742 u687,693,708,723 u649,676,692,715 u647,654,676,691
u620,628,654,666 d614,627,653,655 u615,629,654,656 u588,589,631,646 d580,591,606,615 d569,602,608,626 d597,608,650,652
d637,650,659,670 d647,656,662,680 u597,603,663,664 u552,594,603,604 u570,588,592,611 d589,589,623,626 d577,620,634,634
u596,613,634,634 u593,603,613,628 d597,604,645,646 u582,593,644,644 u562,583,593,612 u557,566,583,595 u518,522,568,568
u472,509,522,535 u472,490,509,509 d481,490,493,525 d480,493,531,544 d501,531,535,537 u515,521,534,548 d502,520,522,533
u487,509,522,523 d484,509,531,537 d507,531,540,562 u487,509,539,540 u475,486,511,512 d441,485,493,499 u466,482,491,494
d474,485,545,559 d525,541,561,567 u504,539,557,557 u500,506,545,546 d495,503,515,543 u494,507,517,532 u475,487,507,508
d467,486,499,501 d488,500,521,531 u446,468,522,529 d435,466,514,526 u488,490,512,527 d487,491,517,528 d510,516,559,566
u520,533,559,586 u510,530,532,564 u509,510,530,564 d510,513,528,541 u472,503,530,530 u475,486,503,513 d477,485,506,520
d502,503,547,563 d531,548,555,567 u532,547,553,561 d534,547,551,556 d550,551,563,578 d560,562,599,607 d580,598,605,612
u581,596,605,610 u563,576,596,604 u547,549,576,583 d537,548,566,567 u532,555,564,566 u537,542,557,568 d503,540,544,544
u527,529,545,547 d518,531,536,552 d537,537,568,568 d561,568,580,601 u565,565,581,603 d564,568,580,594 d577,579,598,600
d587,601,634,639 u603,614,634,634 d602,616,628,634 u606,612,629,652 d596,611,638,643 d623,635,662,662 d656,661,668,679
u652,660,667,677 u649,649,662,681 d650,650,659,670 d660,660,673,690 d670,674,709,710 f681,704,705,718 u676,686,706,706
d674,687,692,705 u675,689,691,701 d691,691,706,727 d705,705,720,729 u681,683,721,731 u659,676,685,700 u668,674,679,687
u670,671,678,708 u656,668,671,687 d655,668,685,688 d679,683,689,707 u649,659,686,690 u639,643,659,662 u634,634,645,656
u622,630,636,649 u590,596,630,639 u539,550,598,598 u543,550,552,566 d548,548,583,587`.split(/\s+/);

var kinds = { u: 'up', d: 'down', f: 'flat' };
var left = 6;
var top0 = 56;
var marks = '';

function hline(name, y) {
    y = y - top0 + 0.5;
    return '<line class="' + name + '" x1="-1" x2="100%" y1="' + y + '" y2="' + y + '"/>';
}

marks += hline('order', 365);
marks += hline('order soft', 519.5);
marks += hline('order', 614);
marks += hline('order', 768);

candles.forEach(function (item, i) {
    var name = kinds[item[0]];
    var v = item.slice(1).split(',').map(Number);
    var x = 5 + i * 4 - left;
    marks += '<rect class="' + name + '" x="' + x + '" y="' + (v[0] - top0) + '" width="1" height="' + (v[3] - v[0]) + '"/>';
    marks += '<rect class="' + name + '" x="' + (x - 1) + '" y="' + (v[1] - top0) + '" width="3" height="' + (v[2] - v[1]) + '"/>';
});

marks += hline('entry-base', 552);
marks += hline('entry', 552);
marks += hline('ask', 553);
marks += hline('entry-base', 582);
marks += hline('entry', 582);
marks += hline('bid', 583);
marks += '<line class="edge" x1="439.5" x2="439.5" y1="29" y2="206"/>';
document.getElementById('candles').innerHTML = marks;

// price scale
var prices = document.getElementById('prices');
for (var i = 0; i < 26; i++) {
    var price = document.createElement('span');
    price.className = 'price';
    price.textContent = (180.2 - i * 0.55).toFixed(2);
    prices.appendChild(price);
}

// time scale, a label every 4 hours
var times = document.getElementById('times');
var hours = ['00', '04', '08', '12', '16', '20'];
for (var n = 0; n < 24; n++) {
    var slot = n + 3;
    var label = document.createElement('span');
    label.textContent = n === 0 ? '19 Feb 2025' : (19 + Math.floor(slot / 6)) + ' Feb ' + hours[slot % 6] + ':30';
    times.appendChild(label);
}
```
